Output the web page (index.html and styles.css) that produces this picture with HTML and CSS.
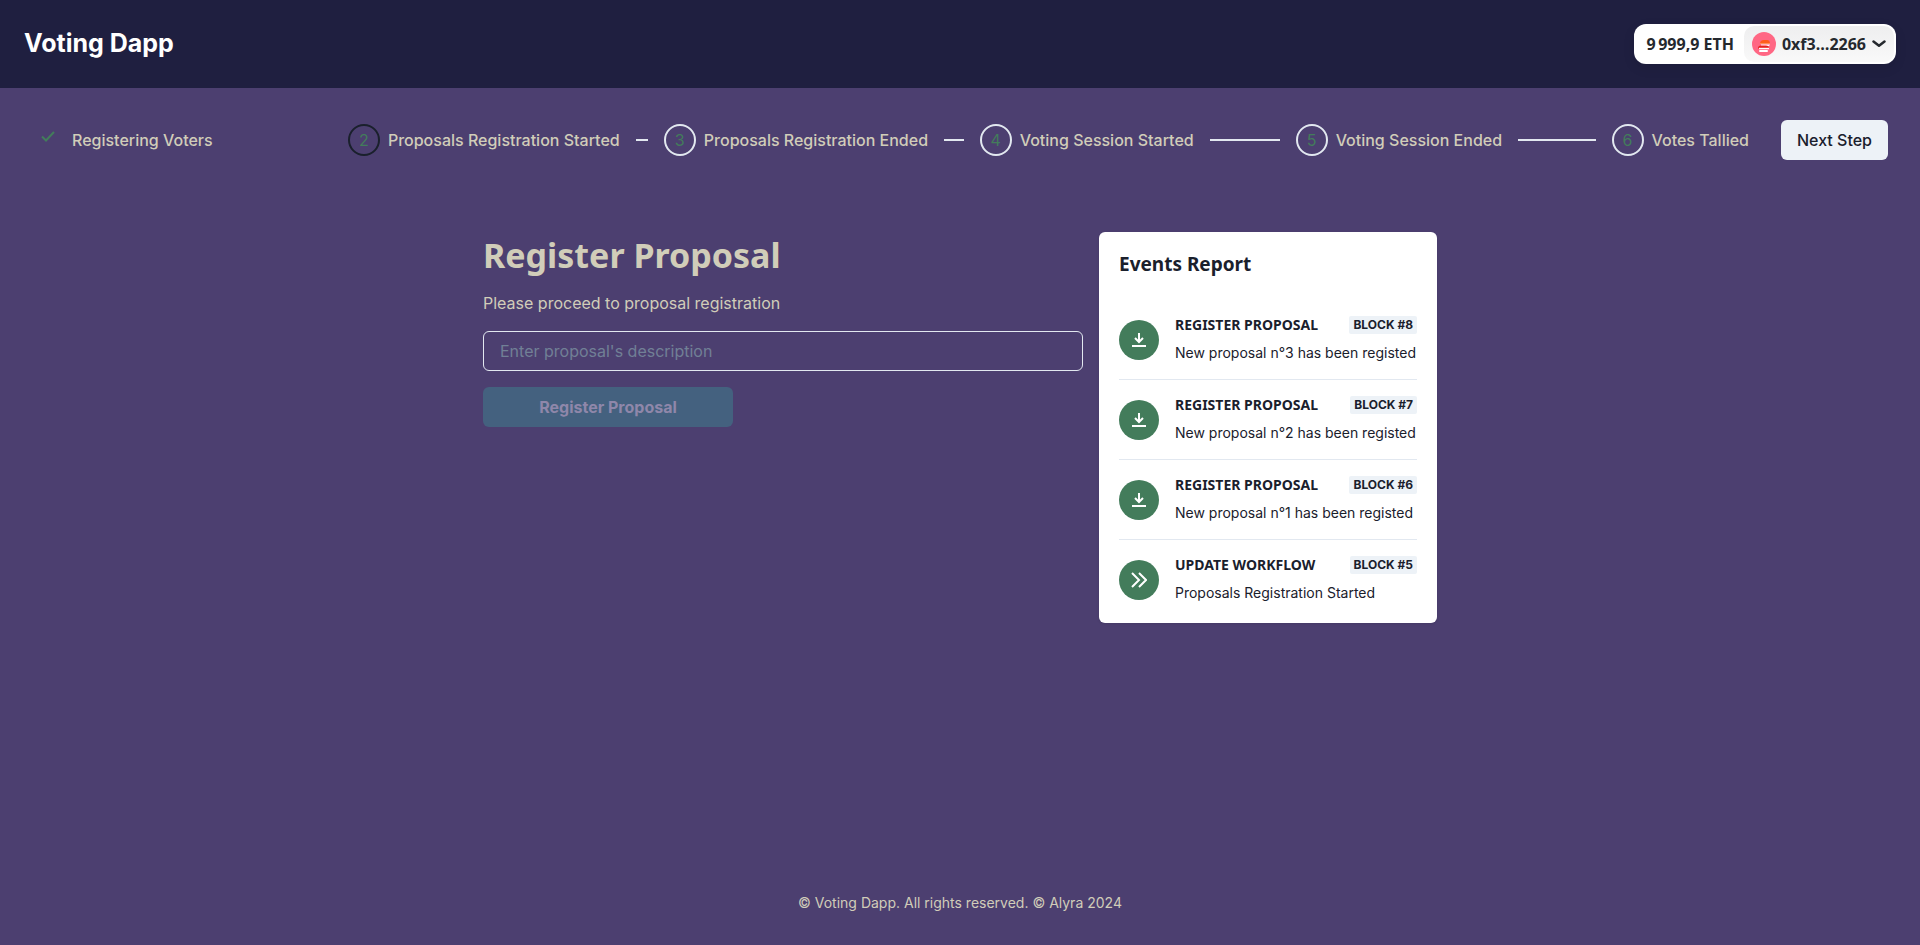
FILE: index.html
```html
<!DOCTYPE html>
<html lang="en">
<head>
<meta charset="utf-8">
<meta name="viewport" content="width=device-width, initial-scale=1">
<title>Voting Dapp</title>
<link rel="stylesheet" href="styles.css">
</head>
<body>
<svg class="sprite" aria-hidden="true">
  <symbol id="download" viewBox="0 0 14 14"><path d="M7 0v8M3 5l4 4 4-4" fill="none" stroke="currentColor" stroke-width="2"/><path d="M0 13h14" stroke="currentColor" stroke-width="2"/></symbol>
</svg>
<header class="header">
  <p class="brand">Voting Dapp</p>
  <button class="account" type="button">
    <span class="balance">9&#8239;999,9 ETH</span>
    <span class="wallet">
      <svg class="avatar" viewBox="0 0 24 24" aria-hidden="true">
        <circle cx="12" cy="12" r="12" fill="#ff6784"/>
        <path d="M8 12q0-4 4-4h3q3 0 3 4z" fill="#ff5c1c"/>
        <path d="M8 11h10v1H8z" fill="#ff8e55"/>
        <path d="M9 12.500h9l-1 1.500H9z" fill="#fff"/>
        <path d="M6 16.500q0-3 3-3h5q3 0 3 3z" fill="#e8201c"/>
        <path d="M7 15.800h10v1.400H7z" fill="#fff"/>
        <rect x="7" y="18" width="9" height="2" rx="1" fill="#fff"/>
      </svg>
      <span>0xf3…2266</span>
      <svg class="chevron" viewBox="0 0 14 8" aria-hidden="true"><path d="M1.500 1.500L7 5.800l5.500-4.300" fill="none" stroke="#25292e" stroke-width="2.500" stroke-linecap="round" stroke-linejoin="round"/></svg>
    </span>
  </button>
</header>
<nav class="workflow" aria-label="Workflow">
  <ol class="steps">
    <li class="step done"><span class="dot"><svg viewBox="0 0 14 11" aria-label="Complete"><path d="M1 5.500l4 4L13 1" fill="none" stroke="currentColor" stroke-width="2"/></svg></span><span>Registering Voters</span></li>
    <li class="step active"><span class="dot">2</span><span>Proposals Registration Started</span></li>
    <li class="step"><span class="dot">3</span><span>Proposals Registration Ended</span></li>
    <li class="step"><span class="dot">4</span><span>Voting Session Started</span></li>
    <li class="step"><span class="dot">5</span><span>Voting Session Ended</span></li>
    <li class="step"><span class="dot">6</span><span>Votes Tallied</span></li>
  </ol>
  <button class="next" type="button">Next Step</button>
</nav>
<main class="main">
  <form class="proposal">
    <h1>Register Proposal</h1>
    <label for="description">Please proceed to proposal registration</label>
    <input id="description" type="text" placeholder="Enter proposal's description">
    <button class="register" type="submit" disabled>Register Proposal</button>
  </form>
  <section class="card">
    <h2>Events Report</h2>
    <ul class="events">
      <li class="event"><span class="icon"><svg viewBox="0 0 14 14"><use href="#download"/></svg></span><div class="info"><div class="line"><h3>Register Proposal</h3><span class="badge">Block #8</span></div><p>New proposal n°3 has been registed</p></div></li>
      <li class="event"><span class="icon"><svg viewBox="0 0 14 14"><use href="#download"/></svg></span><div class="info"><div class="line"><h3>Register Proposal</h3><span class="badge">Block #7</span></div><p>New proposal n°2 has been registed</p></div></li>
      <li class="event"><span class="icon"><svg viewBox="0 0 14 14"><use href="#download"/></svg></span><div class="info"><div class="line"><h3>Register Proposal</h3><span class="badge">Block #6</span></div><p>New proposal n°1 has been registed</p></div></li>
      <li class="event"><span class="icon wide"><svg viewBox="0 0 16 16"><path d="M1 1l7 7-7 7M8 1l7 7-7 7" fill="none" stroke="currentColor" stroke-width="2"/></svg></span><div class="info"><div class="line"><h3>Update Workflow</h3><span class="badge">Block #5</span></div><p>Proposals Registration Started</p></div></li>
    </ul>
  </section>
</main>
<footer class="footer">© Voting Dapp. All rights reserved. © Alyra 2024</footer>
</body>
</html>
```

FILE: styles.css
```css
:root {
  --sand: #d1cdb9;
  --green: #437c5b;
  --ink: #1a202c;
  --line: #e2e8f0;
  --heading: "Noto Sans", "Open Sans", sans-serif;
}
* { box-sizing: border-box; margin: 0; padding: 0; }
body {
  display: flex;
  flex-direction: column;
  min-height: 100vh;
  background: #4c3f70;
  color: var(--sand);
  font: 16px/24px Inter, sans-serif;
}
button, input { font: inherit; border: 0; }
button { cursor: pointer; }
ol, ul { list-style: none; }
.sprite { position: absolute; width: 0; height: 0; }

.header {
  display: flex;
  align-items: center;
  justify-content: space-between;
  padding: 24px;
  background: #1f1f40;
}
.brand { color: #fff; font-size: 25px; font-weight: 700; line-height: 38px; padding-bottom: 2px; }
.account {
  display: flex;
  align-items: center;
  padding: 2px;
  border-radius: 12px;
  background: #fff;
  color: #25292e;
  font: 700 16px/20px var(--heading);
  box-shadow: 0 4px 12px rgba(0, 0, 0, .1);
}
.balance { padding: 0 10px; }
.wallet {
  display: flex;
  align-items: center;
  gap: 6px;
  padding: 6px 8px;
  border-radius: 10px;
  background: linear-gradient(#eeeeef, #f9f9f9);
}
.avatar { width: 24px; height: 24px; }
.chevron { width: 14px; height: 8px; }

.workflow { display: flex; align-items: center; gap: 32px; padding: 32px; }
.steps { display: flex; flex: 1; gap: 16px; font-weight: 500; }
.step { display: flex; flex: 1 0 0; align-items: center; gap: 8px; white-space: nowrap; }
.step:last-child { flex: none; }
.step::after { content: ""; flex: 1; height: 2px; margin-left: 8px; background: var(--line); }
.step.done::after { background: none; }
.step:last-child::after { display: none; }
.dot {
  display: flex;
  align-items: center;
  justify-content: center;
  width: 32px;
  height: 32px;
  border: 2px solid var(--line);
  border-radius: 50%;
  color: var(--green);
  font-weight: 400;
}
.active .dot { border-color: var(--ink); }
.done .dot { border-color: transparent; padding-bottom: 8px; }
.done svg { width: 14px; height: 11px; }
.next {
  height: 40px;
  padding: 0 16px;
  border-radius: 6px;
  background: #edf2f7;
  color: var(--ink);
  font-weight: 500;
}

.main {
  display: flex;
  flex: 1;
  align-items: flex-start;
  justify-content: center;
  gap: 16px;
  padding: 40px 32px;
}
.proposal { display: flex; flex-direction: column; width: 600px; }
h1 { font: 700 34px/46px var(--heading); }
.proposal label { margin: 13px 0 16px; }
.proposal input {
  height: 40px;
  padding: 0 16px;
  border: 1px solid var(--line);
  border-radius: 6px;
  background: transparent;
  color: var(--sand);
}
.proposal input::placeholder { color: #718096; opacity: 1; }
.register {
  width: 250px;
  height: 40px;
  margin-top: 16px;
  border-radius: 6px;
  background: #44617f;
  color: #8f87aa;
  font-weight: 700;
}

.card { width: 338px; padding: 20px; border-radius: 6px; background: #fff; color: var(--ink); box-shadow: 0 1px 3px rgba(0, 0, 0, .1); }
h2 { font: 700 19px/24px var(--heading); }
.events { margin-top: 40px; }
.event { display: flex; align-items: center; gap: 16px; }
.event + .event { margin-top: 16px; padding-top: 16px; border-top: 1px solid var(--line); }
.icon {
  display: flex;
  flex: none;
  align-items: center;
  justify-content: center;
  width: 40px;
  height: 40px;
  border-radius: 50%;
  background: var(--green);
  color: #fff;
}
.icon svg { width: 14px; height: 14px; }
.icon.wide svg { width: 16px; height: 16px; }
.info { flex: 1; white-space: nowrap; }
.line { display: flex; align-items: center; justify-content: space-between; }
h3 { font: 700 14px/18px var(--heading); text-transform: uppercase; }
.badge {
  padding: 0 4px;
  border-radius: 2px;
  background: #edf2f7;
  font-size: 12px;
  font-weight: 700;
  line-height: 18px;
  text-transform: uppercase;
}
.info p { margin-top: 8px; font-size: 14px; line-height: 21px; }
.footer { padding: 32px; font-size: 14px; line-height: 20px; text-align: center; }
```
